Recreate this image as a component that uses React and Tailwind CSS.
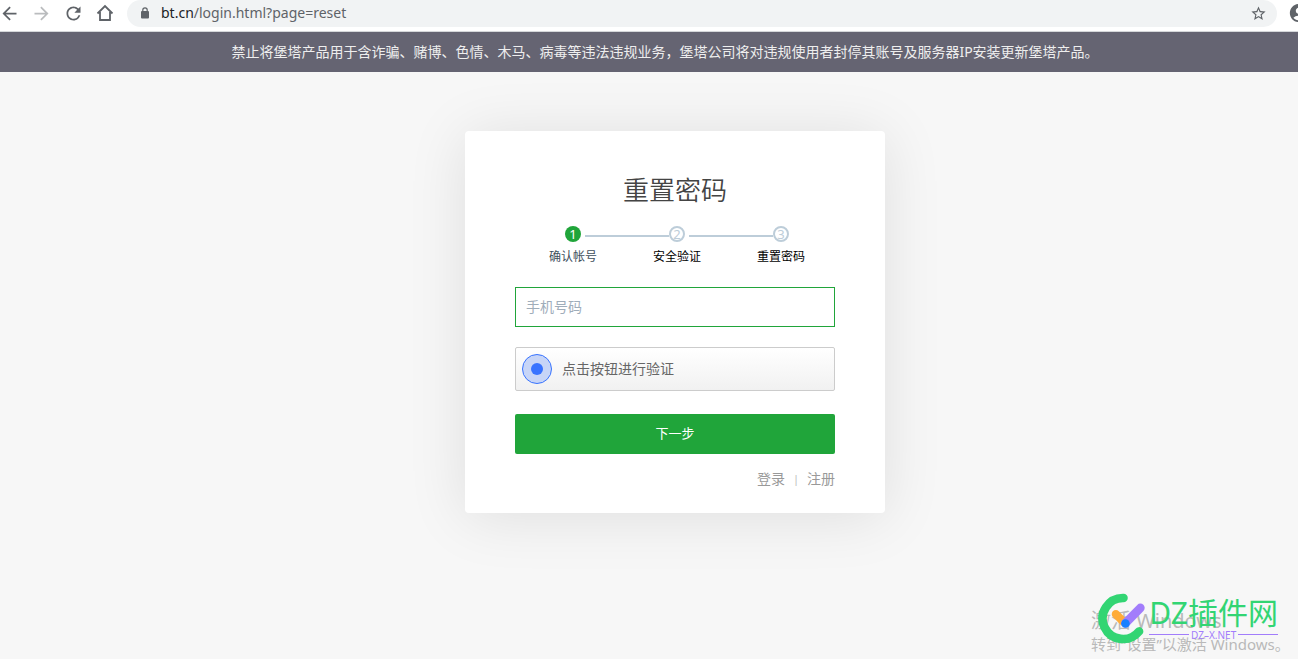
import { useState } from 'react'
import { MdAccountCircle, MdArrowBack, MdArrowForward, MdRefresh, MdStarBorder } from 'react-icons/md'

const STEPS = ['确认帐号', '安全验证', '重置密码']

function HomeIcon() {
  return (
    <svg width="18" height="18" viewBox="0 0 18 18" fill="none" stroke="currentColor" strokeWidth="1.8">
      <path d="M1.5 9.5 9 2l7.5 7.5M4 8v8h10V8" />
    </svg>
  )
}

function LockIcon() {
  return (
    <svg width="10" height="12" viewBox="0 0 10 12" className="shrink-0">
      <rect x="1" y="4" width="8" height="7.5" rx="1" fill="currentColor" />
      <path d="M2.8 5V3a2.2 2.2 0 0 1 4.4 0v2" fill="none" stroke="currentColor" strokeWidth="1.2" />
    </svg>
  )
}

function BrowserBar() {
  const [url] = useState({ host: 'bt.cn', path: '/login.html?page=reset' })

  return (
    <header className="flex h-8 shrink-0 items-start border-b border-[#d5d7da] bg-white text-[#5f6368]">
      <nav className="flex h-[26px] w-[127px] shrink-0 items-center gap-3" aria-label="浏览器">
        <button aria-label="后退" className="-ml-px flex size-5 items-center justify-center">
          <MdArrowBack size={21} className="shrink-0" />
        </button>
        <button aria-label="前进" disabled className="flex size-5 items-center justify-center text-[#babcbe]">
          <MdArrowForward size={21} className="shrink-0" />
        </button>
        <button aria-label="刷新" className="flex size-5 items-center justify-center">
          <MdRefresh size={21} className="shrink-0" />
        </button>
        <button aria-label="主页" className="flex size-5 items-center justify-center">
          <HomeIcon />
        </button>
      </nav>
      <div className="flex h-[27px] min-w-0 flex-1 items-center rounded-full bg-[#f1f3f4] px-2.5 pb-px pl-[13px]">
        <LockIcon />
        <p className="ml-[11px] flex-1 truncate text-sm">
          <span className="text-[#202124]">{url.host}</span>
          {url.path}
        </p>
        <button aria-label="添加书签">
          <MdStarBorder size={17} />
        </button>
      </div>
      <div className="flex h-[26px] w-[21px] shrink-0 items-center overflow-hidden pl-[11px]">
        <MdAccountCircle size={22} className="shrink-0" />
      </div>
    </header>
  )
}

function Steps({ current }) {
  return (
    <ol className="mt-4 ml-1.5 grid w-[312px] grid-cols-3 text-xs">
      {STEPS.map((label, i) => (
        <li key={label} className="text-center">
          <div className="grid h-[18px] grid-cols-[1fr_16px_1fr] items-center">
            <span className={i > 0 ? 'mt-1 h-0.5 bg-[#bdcdd9]' : ''} />
            <span
              className={
                i === current
                  ? 'flex size-4 items-center justify-center rounded-full bg-[#20a53a] pt-0.5 text-[13px] text-white'
                  : 'flex size-4 items-center justify-center rounded-full border-2 border-[#bdcdd9] pt-0.5 text-[13px] text-[#bdcdd9]'
              }
            >
              {i + 1}
            </span>
            <span className={i < STEPS.length - 1 ? 'mt-1 ml-1 h-0.5 bg-[#bdcdd9]' : ''} />
          </div>
          <p className={i === current ? 'mt-1 leading-5 text-[#404f5c]' : 'mt-1 leading-5 text-black'}>
            {label}
          </p>
        </li>
      ))}
    </ol>
  )
}

function ResetForm() {
  const [phone, setPhone] = useState('')

  return (
    <form
      onSubmit={e => e.preventDefault()}
      className="w-[420px] rounded-[4px] bg-white px-[50px] pt-10 pb-6 shadow-[0_4px_60px_rgba(0,0,0,0.1)]"
    >
      <h1 className="text-center text-[26px] leading-[38px] font-[350] text-[#444]">重置密码</h1>
      <Steps current={0} />
      <input
        type="tel"
        aria-label="手机号码"
        placeholder="手机号码"
        value={phone}
        onChange={e => setPhone(e.target.value)}
        className="mt-5 block h-10 w-full border border-[#20a53a] px-2.5 pb-0.5 text-sm text-[#555] outline-none placeholder:text-[#9fadba]"
      />
      <button
        type="button"
        className="mt-5 flex h-11 w-full items-center gap-2.5 rounded-[2px] border border-[#ccc] bg-linear-to-b from-white to-[#f1f1f1] px-1.5 text-sm text-[#666]"
      >
        <span className="flex size-[30px] items-center justify-center rounded-full border border-[#3873ff] bg-[#c7d5f7]">
          <span className="size-3 rounded-full bg-[#3873ff]" />
        </span>
        点击按钮进行验证
      </button>
      <button type="submit" className="mt-[23px] h-10 w-full rounded-[2px] bg-[#20a53a] text-[13px] text-white">
        下一步
      </button>
      <p className="mt-[15px] flex items-center justify-end gap-2 text-sm text-[#999]">
        <a href="#login">登录</a>
        <span className="text-[11px] text-[#bbb]">|</span>
        <a href="#register">注册</a>
      </p>
    </form>
  )
}

function ActivateNotice() {
  return (
    <div className="absolute right-1 bottom-1 w-[203px] whitespace-nowrap text-[#b9b9b9]">
      <p className="text-xl leading-6">激活 Windows</p>
      <p className="text-[15px] leading-[22px]">转到“设置”以激活 Windows。</p>
    </div>
  )
}

function SiteMark() {
  return (
    <div className="absolute right-5 bottom-3.5 flex items-center gap-1">
      <svg width="47" height="53" viewBox="54 38 142 158" fill="none" strokeLinecap="round" strokeWidth="26">
        <path d="M131 55A62 62 0 1 0 178 156" stroke="#32d573" />
        <path d="M108 104 131 127" stroke="#ffac38" strokeWidth="25" />
        <path d="M182 85 137 131" stroke="#a27dfb" />
        <circle cx="137" cy="132" r="13" fill="#1780ff" />
      </svg>
      <div>
        <p className="text-[30px] leading-8 text-[#32d573]">DZ插件网</p>
        <p className="flex items-center gap-0.5 text-[10px] leading-3 text-[#a27dfb]">
          <span className="h-px flex-1 bg-current" />
          DZ–X.NET
          <span className="h-px flex-1 bg-current" />
        </p>
      </div>
    </div>
  )
}

export default function App() {
  return (
    <div className="relative flex min-h-screen flex-col overflow-hidden bg-[#f7f7f7] font-['Noto_Sans','Noto_Sans_CJK_SC',sans-serif]">
      <BrowserBar />
      <div className="flex min-h-10 items-center justify-center bg-[#656472] pl-8 text-sm text-[#eee]">
        禁止将堡塔产品用于含诈骗、赌博、色情、木马、病毒等违法违规业务，堡塔公司将对违规使用者封停其账号及服务器IP安装更新堡塔产品。
      </div>
      <main className="flex flex-1 items-start justify-center pt-[59px] pl-[52px]">
        <ResetForm />
      </main>
      <ActivateNotice />
      <SiteMark />
    </div>
  )
}
